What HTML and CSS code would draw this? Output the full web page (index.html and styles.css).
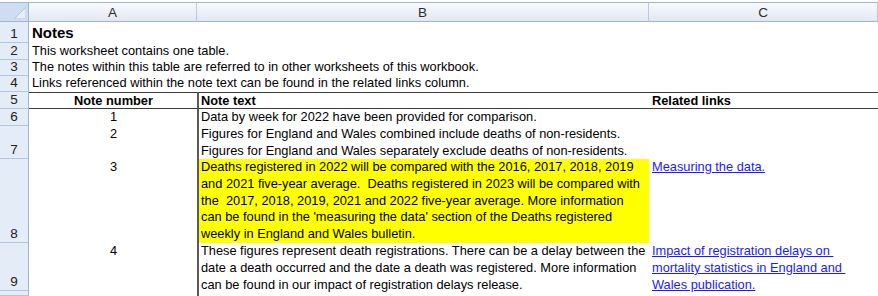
FILE: index.html
```html
<!DOCTYPE html>
<html>
<head>
<meta charset="utf-8">
<title>Notes</title>
<link rel="stylesheet" href="styles.css">
</head>
<body>
<div class="sheet">
  <div class="corner"><svg class="tri" width="12" height="12" viewBox="0 0 12 12"><polygon points="12,0 12,12 0,12" fill="#e8eef6" stroke="#b3c5dc" stroke-width="1"/></svg></div>
  <div class="colhead">A</div>
  <div class="colhead">B</div>
  <div class="colhead">C</div>

  <div class="rowhead">1</div>
  <div class="cell span3 title">Notes</div>

  <div class="rowhead">2</div>
  <div class="cell span3">This worksheet contains one table.</div>

  <div class="rowhead">3</div>
  <div class="cell span3">The notes within this table are referred to in other worksheets of this workbook.</div>

  <div class="rowhead">4</div>
  <div class="cell span3">Links referenced within the note text can be found in the related links column.</div>

  <div class="rowhead">5</div>
  <div class="cell th center">Note number</div>
  <div class="cell th colb">Note text</div>
  <div class="cell th">Related links</div>

  <div class="rowhead">6</div>
  <div class="cell num">1</div>
  <div class="cell colb">Data by week for 2022 have been provided for comparison.</div>
  <div class="cell"></div>

  <div class="rowhead">7</div>
  <div class="cell num">2</div>
  <div class="cell colb">Figures for England and Wales combined include deaths of non-residents.<br>Figures for England and Wales separately exclude deaths of non-residents.</div>
  <div class="cell"></div>

  <div class="rowhead">8</div>
  <div class="cell num">3</div>
  <div class="cell colb hl">Deaths registered in 2022 will be compared with the 2016, 2017, 2018, 2019<br>and 2021 five-year average.  Deaths registered in 2023 will be compared with<br>the  2017, 2018, 2019, 2021 and 2022 five-year average. More information<br>can be found in the 'measuring the data' section of the Deaths registered<br>weekly in England and Wales bulletin.</div>
  <div class="cell top"><a class="link" href="#">Measuring the data.</a></div>

  <div class="rowhead">9</div>
  <div class="cell num">4</div>
  <div class="cell colb">These figures represent death registrations. There can be a delay between the<br>date a death occurred and the date a death was registered. More information<br>can be found in our impact of registration delays release.</div>
  <div class="cell top"><a class="link" href="#">Impact of registration delays on <br>mortality statistics in England and <br>Wales publication.</a></div>

  <div class="rowhead"></div>
  <div class="cell"></div>
  <div class="cell colb"></div>
  <div class="cell"></div>
</div>
</body>
</html>
```

FILE: styles.css
```css
html, body {
  margin: 0;
  padding: 0;
  background: #ffffff;
}

body {
  font-family: "Liberation Sans", Arial, sans-serif;
  font-size: 12.8px;
  color: #000000;
  width: 878px;
  height: 296px;
  overflow: hidden;
}

.sheet {
  display: grid;
  grid-template-columns: 29px 168px 452px 1fr;
  grid-template-rows: 20px 21px 17px 16px 16px 17px 17px 33px 84px 48px 1fr;
  height: 296px;
  padding-top: 2px;
  box-sizing: border-box;
}

.corner {
  position: relative;
  background: #cfddf0;
  border-top: 1px solid #9db5d6;
  border-right: 1px solid #9eb6ce;
  border-bottom: 1px solid #9eb6ce;
}

.tri {
  position: absolute;
  right: 2px;
  bottom: 2px;
}

.colhead {
  background: linear-gradient(to bottom, #f7f9fc 0%, #eef2f8 45%, #e0e8f3 100%);
  border-top: 1px solid #9db5d6;
  border-right: 1px solid #b9cade;
  border-bottom: 1px solid #9eb6ce;
  color: #2b2b2b;
  font-size: 13.5px;
  display: flex;
  align-items: center;
  justify-content: center;
}

.rowhead {
  background: #e4ecf7;
  border-right: 1px solid #9eb6ce;
  border-bottom: 1px solid #b4c6dc;
  color: #222222;
  font-size: 13.5px;
  display: flex;
  align-items: flex-end;
  justify-content: center;
  line-height: 16px;
}

.cell {
  display: flex;
  align-items: flex-end;
  padding: 0 2px 0 3px;
  line-height: 16.75px;
  white-space: pre;
  overflow: visible;
  min-width: 0;
}

.span3 {
  grid-column: 2 / span 3;
  padding-left: 3px;
}

.title {
  font-weight: bold;
  font-size: 15px;
  line-height: 18px;
  padding-bottom: 1px;
}

.th {
  font-weight: bold;
  border-top: 1px solid #3a3a3a;
  border-bottom: 1px solid #3a3a3a;
  line-height: 15px;
  align-items: center;
}

.center {
  justify-content: center;
}

.colb {
  border-left: 2px solid #5a5a5a;
  padding-left: 2px;
  align-items: flex-start;
}

.num {
  justify-content: center;
  align-items: flex-start;
}

.top {
  align-items: flex-start;
}

.hl {
  background: #ffff00;
}

.link {
  color: #1a1aff;
  text-decoration: underline;
}
```
